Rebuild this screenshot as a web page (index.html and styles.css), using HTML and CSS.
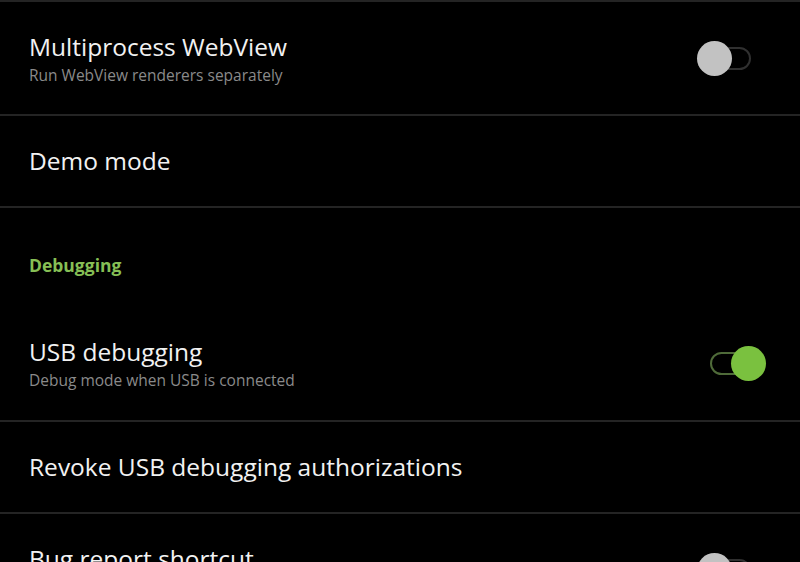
FILE: index.html
```html
<!DOCTYPE html>
<html lang="en">
<head>
    <meta charset="UTF-8">
    <meta name="viewport" content="width=device-width, initial-scale=1.0">
    <title>Developer options</title>
    <link rel="stylesheet" href="styles.css">
</head>
<body>

<div class="settings">
    <!-- Multiprocess WebView -->
    <div class="row row-summary">
        <div class="text">
            <div class="title">Multiprocess WebView</div>
            <div class="summary">Run WebView renderers separately</div>
        </div>
        <div class="switch"><span class="track"></span><span class="thumb"></span></div>
    </div>

    <div class="row row-simple">
        <div class="title">Demo mode</div>
    </div>

    <!-- Categoría -->
    <div class="category">Debugging</div>

    <div class="row row-summary no-top">
        <div class="text">
            <div class="title">USB debugging</div>
            <div class="summary">Debug mode when USB is connected</div>
        </div>
        <div class="switch on"><span class="track"></span><span class="thumb"></span></div>
    </div>

    <div class="row row-simple">
        <div class="title">Revoke USB debugging authorizations</div>
    </div>

    <div class="row row-summary">
        <div class="text">
            <div class="title">Bug report shortcut</div>
            <div class="summary">Show a button in the power menu for taking a bug report</div>
        </div>
        <div class="switch"><span class="track"></span><span class="thumb"></span></div>
    </div>
</div>

</body>
</html>
```

FILE: styles.css
```css
* {
    margin: 0;
    padding: 0;
    box-sizing: border-box;
}

body {
    font-family: 'Open Sans', 'Noto Sans', sans-serif;
    background-color: #000;
    color: #f2f2f2;
    overflow: hidden;
}

.settings {
    width: 800px;
}

.row {
    display: flex;
    align-items: center;
    justify-content: space-between;
    padding: 0 34px 0 29px;
    border-top: 2px solid #242424;
}

.row.no-top {
    border-top: none;
}

.row-summary {
    height: 114px;
}

.row-simple {
    height: 92px;
}

.title {
    font-size: 24.5px;
    line-height: 32px;
    color: #f2f2f2;
}

.summary {
    font-size: 15.5px;
    line-height: 22px;
    color: #8a8a8a;
    margin-top: 1px;
}

.category {
    height: 100px;
    padding: 46px 29px 0;
    border-top: 2px solid #242424;
    font-size: 17.5px;
    line-height: 22px;
    font-weight: 700;
    color: #86bf55;
}

/* Interruptor */
.switch {
    position: relative;
    width: 69px;
    height: 35px;
    flex-shrink: 0;
}

.switch .track {
    position: absolute;
    left: 13px;
    top: 6px;
    width: 41px;
    height: 23px;
    border: 2px solid #303030;
    border-radius: 12px;
}

.switch .thumb {
    position: absolute;
    left: 0;
    top: 0;
    width: 35px;
    height: 35px;
    border-radius: 50%;
    background-color: #c2c2c2;
}

.switch.on .track {
    border-color: #4f6b39;
}

.switch.on .thumb {
    left: auto;
    right: 0;
    background-color: #7ac13f;
}
```
